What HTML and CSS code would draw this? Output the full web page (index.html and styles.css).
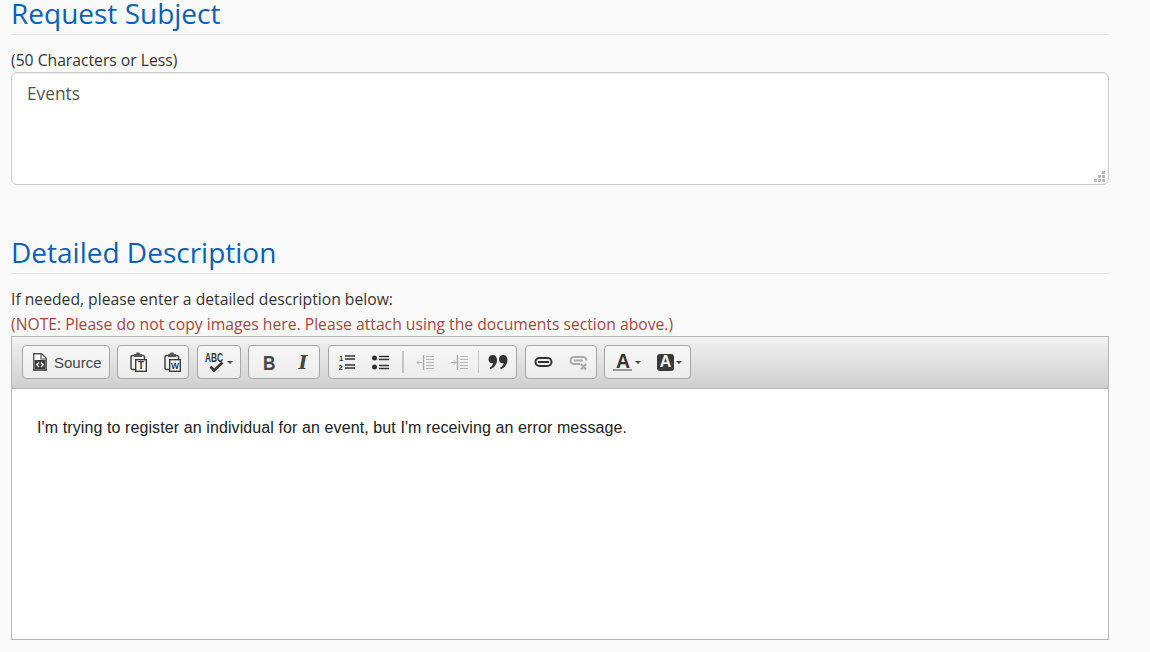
FILE: index.html
```html
<!DOCTYPE html>
<html lang="en">
<head>
<meta charset="utf-8">
<title>Request</title>
<link rel="stylesheet" href="styles.css">
</head>
<body>
<main class="page">
  <h2 class="heading">Request Subject</h2>
  <p class="label">(50 Characters or Less)</p>
  <div class="subject">Events
    <svg class="grip" width="11" height="11" viewBox="0 0 11 11"><path fill="#bbb" d="M8 0h3v3H8zM4 4h3v3H4zM8 4h3v3H8zM0 8h3v3H0zM4 8h3v3H4zM8 8h3v3H8z"/></svg>
  </div>
  <h2 class="heading second">Detailed Description</h2>
  <p class="label">If needed, please enter a detailed description below:</p>
  <p class="label note">(NOTE: Please do not copy images here. Please attach using the documents section above.)</p>
  <div class="editor">
    <div class="toolbar">
      <div class="group source"><svg width="16" height="20" viewBox="0 0 16 20"><path d="M1.700 1.700h8l4.600 4.600v12h-12.600z" fill="#fff" stroke="#555" stroke-width="1.400"/><path d="M9 2v5h5" fill="none" stroke="#555" stroke-width="1.200"/><rect x="2.500" y="8" width="11" height="9.500" fill="#3a3a3a"/><path d="M7 10.500L4.800 12.800 7 15M9 10.500l2.200 2.300L9 15" fill="none" stroke="#fff" stroke-width="1.400"/></svg><span>Source</span></div>
      <div class="group clip"><span class="btn"><svg width="18" height="26" viewBox="0 -3 18 26"><path d="M5 3.500H3.500a1.500 1.500 0 0 0-1.500 1.500v11a1.500 1.500 0 0 0 1.500 1.500H6M13 3.500h1a1.500 1.500 0 0 1 1.500 1.500v2" fill="none" stroke="#444" stroke-width="1.500"/><path d="M7.500.5h3l.5 1.500h2v3H5V2h2z" fill="#555"/><rect x="6.700" y="7.700" width="10.600" height="11.600" fill="#fff" stroke="#3a3a3a" stroke-width="1.400"/><text class="glyph" x="12" y="17.200" font-size="10" text-anchor="middle">T</text></svg></span><span class="btn"><svg width="18" height="26" viewBox="0 -3 18 26"><path d="M5 3.500H3.500a1.500 1.500 0 0 0-1.500 1.500v11a1.500 1.500 0 0 0 1.500 1.500H6M13 3.500h1a1.500 1.500 0 0 1 1.500 1.500v2" fill="none" stroke="#444" stroke-width="1.500"/><path d="M7.500.5h3l.5 1.500h2v3H5V2h2z" fill="#555"/><rect x="6.700" y="7.700" width="10.600" height="11.600" fill="#fff" stroke="#3a3a3a" stroke-width="1.400"/><text class="glyph" x="12" y="17" font-size="8.500" text-anchor="middle">W</text></svg></span></div>
      <div class="group spell"><svg width="22" height="28" viewBox="0 0 22 28"><text class="glyph" x="0" y="14" font-size="13.500" textLength="18" lengthAdjust="spacingAndGlyphs">ABC</text><path d="M5.500 18.500l3.500 4 8.500-8" fill="none" stroke="#3a3a3a" stroke-width="2.800"/></svg><i class="caret"></i></div>
      <div class="group pair"><span class="btn"><svg width="16" height="28" viewBox="0 0 16 28"><text class="glyph soft" x="2" y="22" font-size="20" textLength="12.500" lengthAdjust="spacingAndGlyphs">B</text></svg></span><span class="btn"><svg width="16" height="28" viewBox="0 0 16 28"><text class="serif bold italic" x="8" y="21" font-size="19" text-anchor="middle">I</text></svg></span></div>
      <div class="group list">
        <span class="btn"><svg width="17" height="17" viewBox="0 0 17 17"><path d="M7 2h10M7 5h10M7 11h10M7 14h10" stroke="#333" stroke-width="1.400"/><text class="glyph" x="1" y="7" font-size="7.500">1</text><text class="glyph" x=".5" y="15.500" font-size="7.500">2</text></svg></span>
        <span class="btn"><svg width="18" height="17" viewBox="0 0 18 17"><circle cx="3.500" cy="4" r="2.500" fill="#333"/><circle cx="3.500" cy="13" r="2.500" fill="#333"/><path d="M8 2.500h10M8 5.500h10M8 11.500h10M8 14.500h10" stroke="#333" stroke-width="1.400"/></svg></span>
        <i class="sep wide"></i>
        <span class="btn"><svg width="18" height="17" viewBox="0 0 18 17"><path d="M7.500 1v15" stroke="#aaa" stroke-width="1.400"/><path d="M10 2.500h8M10 5.500h8M10 8.500h8M10 11.500h8M10 14.500h8M1 8.500h5M3 6.500L1 8.500l2 2" fill="none" stroke="#b4b4b4" stroke-width="1"/></svg></span>
        <span class="btn"><svg width="18" height="17" viewBox="0 0 18 17"><path d="M7.500 1v15" stroke="#aaa" stroke-width="1.400"/><path d="M10 2.500h8M10 5.500h8M10 8.500h8M10 11.500h8M10 14.500h8M1 8.500h5M4 6.500l2 2-2 2" fill="none" stroke="#b4b4b4" stroke-width="1"/></svg></span>
        <i class="sep thin"></i>
        <span class="btn"><svg width="20" height="16" viewBox="0 0 20 16"><path fill="#333" d="M4.700 1C2.200 1 .5 2.800.5 5.200S2 9.200 4 9.200c.5 0 .9-.1 1.200-.3C4.900 11 3.500 12.700 1.500 13.800l.9 1.400C6.300 13.500 9 10.200 9 6 9 2.900 7.300 1 4.700 1zM15.200 1C12.700 1 11 2.800 11 5.200s1.500 4 3.500 4c.5 0 .9-.1 1.200-.3-.3 2.100-1.700 3.800-3.700 4.900l.9 1.400c3.900-1.700 6.600-5 6.600-9.200 0-3.100-1.700-5-4.300-5z"/></svg></span>
      </div>
      <div class="group link"><span class="btn"><svg width="20" height="12" viewBox="0 0 20 12"><rect x="1.500" y="2" width="16" height="8" rx="4" fill="none" stroke="#333" stroke-width="2"/><path d="M4 6h11" stroke="#333" stroke-width="2"/></svg></span><span class="btn"><svg width="20" height="17" viewBox="0 0 20 17"><path d="M11 10H5a3.500 3.500 0 0 1 0-7h9a3.500 3.500 0 0 1 3.500 3.500M5 6.500h9" fill="none" stroke="#aaa" stroke-width="2"/><path d="M12 10l5 5.500M17 10l-5 5.500" stroke="#aaa" stroke-width="2.200"/></svg></span></div>
      <div class="group color"><span class="btn"><svg width="20" height="28" viewBox="0 0 20 28"><text class="glyph" x="10" y="20" font-size="19.500" text-anchor="middle">A</text><rect x="0" y="21" width="19" height="2" fill="#999"/></svg><i class="caret"></i></span><span class="btn"><svg width="17" height="17" viewBox="0 0 17 17"><rect width="17" height="17" rx="3" fill="#3a3a3a"/></svg><i class="caret"></i><span class="block-a">A</span></span></div>
    </div>
    <div class="content">I'm trying to register an individual for an event, but I'm receiving an error message.</div>
  </div>
</main>
</body>
</html>
```

FILE: styles.css
```css
* { box-sizing: border-box; }
html, body { margin: 0; padding: 0; }
body {
  height: 652px;
  overflow: hidden;
  background: #fafafa;
  font-family: "Open Sans", sans-serif;
  color: #333;
}
.page { width: 1098px; margin-left: 11px; }
.heading {
  margin: 0;
  height: 35px;
  border-bottom: 1px solid #e6e6e6;
  color: #0b60b5;
  font-size: 28px;
  font-weight: 400;
  line-height: 26px;
}
.second { margin-top: 51px; height: 38px; line-height: 32px; }
.label {
  margin: 0;
  font-size: 15.7px;
  line-height: 24px;
}
.heading + .label { margin-top: 13px; }
.note { margin-top: 1px; color: #a94442; }
.subject {
  position: relative;
  height: 113px;
  padding: 8px 15px;
  background: #fff;
  border: 1px solid #ccc;
  border-radius: 6px;
  box-shadow: inset 0 1px 1px rgba(0,0,0,.075);
  font-size: 17.3px;
  line-height: 26px;
  color: #555;
}
.grip { position: absolute; right: 3px; bottom: 2px; }
.editor {
  height: 304px;
  border: 1px solid #b6b6b6;
  background: #fff;
}
.toolbar {
  display: flex;
  gap: 7px;
  height: 52px;
  padding: 8px 10px 0;
  background: linear-gradient(#f2f2f2, #cfcfcf);
  border-bottom: 1px solid #b6b6b6;
}
.group {
  display: flex;
  align-items: center;
  height: 34px;
  border: 1px solid #a6a6a6;
  border-radius: 4px;
  background: linear-gradient(#f7f7f7, #ececec);
  font-family: "Liberation Sans", sans-serif;
  font-size: 15px;
  color: #474747;
}
.source { gap: 6px; width: 88px; padding-left: 9px; }
.clip, .pair { width: 72px; padding-left: 3px; }
.spell { width: 44px; margin-left: 1px; padding-left: 7px; }
.list { width: 189px; margin-left: 1px; }
.link { width: 72px; margin-left: 1px; }
.color { width: 87px; padding-left: 1px; }
.btn {
  position: relative;
  display: flex;
  align-items: center;
  justify-content: center;
  flex: none;
  width: 34px;
  height: 30px;
}
.link .btn { width: 35px; }
.color .btn { width: 42px; gap: 2px; }
.block-a {
  position: absolute;
  left: 9px;
  top: 6px;
  width: 17px;
  font-weight: 700;
  font-size: 16px;
  line-height: 18px;
  text-align: center;
  color: #f4f4f4;
}
.caret {
  display: block;
  flex: none;
  width: 0;
  height: 0;
  border: 3px solid transparent;
  border-top-color: #444;
  border-bottom: 0;
}
.sep { display: block; flex: none; height: 22px; background: #c4c4c4; }
.wide { width: 2px; margin: 0 4px 0 5px; }
.thin { width: 1px; margin: 0 2px 0 2px; }
.glyph {
  font-family: "Liberation Sans", sans-serif;
  font-weight: 700;
  fill: #333;
}
.soft { fill: #444; }
.serif { font-family: "DejaVu Serif", serif; fill: #444; }
.bold { font-weight: 700; }
.italic { font-style: italic; }
.content {
  padding: 27px 25px;
  font-family: "Liberation Sans", sans-serif;
  font-size: 16px;
  letter-spacing: .1px;
  line-height: 24px;
  color: #222;
}
```
